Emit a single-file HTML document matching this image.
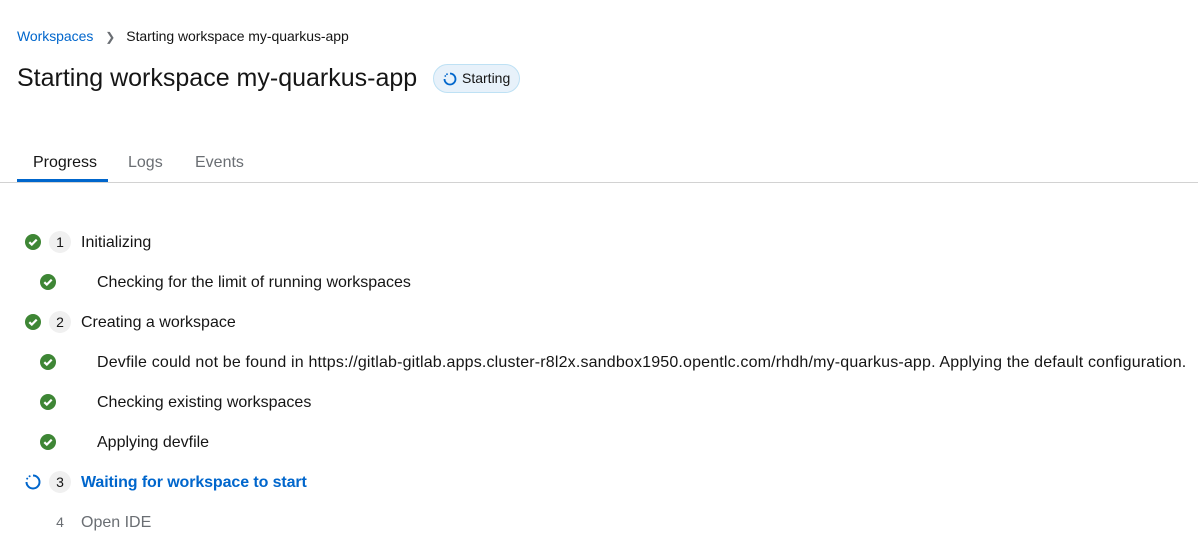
<!DOCTYPE html>
<html><head><style>
body{margin:0;width:1198px;height:552px;background:#fff;font-family:"Liberation Sans",sans-serif;color:#151515;position:relative;overflow:hidden}
.a{position:absolute;white-space:nowrap}
.bc{top:28px;left:17px;font-size:14px;letter-spacing:-0.05px}
.bc span.l{color:#0066cc}
.bc span.s{color:#6a6e73;margin:0 11px 0 12px;font-size:12px}
h1{position:absolute;top:64px;left:17px;margin:0;font-size:25px;font-weight:normal}
.badge{top:64px;left:433px;width:85px;height:27px;border:1px solid #bee1f4;background:#e7f1fa;border-radius:15px;font-size:14px;line-height:27px}
.tab{top:154px;font-size:16px;color:#6a6e73}
.ul{top:179px;left:17px;width:91px;height:3px;background:#0066cc}
.bd{top:182px;left:0;width:1198px;height:1px;background:#d2d2d2}
.row{position:absolute;font-size:16px;white-space:nowrap;line-height:20px}
.num{position:absolute;width:22px;height:22px;border-radius:50%;background:#f0f0f0;font-size:14px;text-align:center;line-height:22px;left:49px}
</style></head><body>
<div class="a bc"><span class="l">Workspaces</span><span class="s">❯</span>Starting workspace my-quarkus-app</div>
<h1>Starting workspace my-quarkus-app</h1>
<div class="a badge"><svg style="position:absolute;left:9px;top:7px" width="14" height="14" viewBox="0 0 14 14"><path d="M7 1.5A5.5 5.5 0 1 1 1.5 7" fill="none" stroke="#0066cc" stroke-width="1.8"/><circle cx="2.3" cy="4" r="0.9" fill="#0066cc"/><circle cx="4" cy="2.2" r="0.9" fill="#0066cc"/></svg><span style="position:absolute;left:28px">Starting</span></div>
<div class="a tab" style="left:33px;color:#151515">Progress</div>
<div class="a tab" style="left:128px">Logs</div>
<div class="a tab" style="left:195px">Events</div>
<div class="a ul"></div><div class="a bd"></div>

<svg width="0" height="0" style="position:absolute"><defs><symbol id="ck" viewBox="0 0 16 16"><circle cx="8" cy="8" r="8" fill="#3e8635"/><path d="M4.3 8.2l2.5 2.4 4.9-5" fill="none" stroke="#fff" stroke-width="2.2"/></symbol></defs></svg>

<svg class="a" style="left:25px;top:234px" width="16" height="16"><use href="#ck"/></svg>
<div class="num" style="top:231px">1</div><div class="row" style="left:81px;top:233px">Initializing</div>

<svg class="a" style="left:40px;top:274px" width="16" height="16"><use href="#ck"/></svg>
<div class="row" style="left:97px;top:273px">Checking for the limit of running workspaces</div>

<svg class="a" style="left:25px;top:314px" width="16" height="16"><use href="#ck"/></svg>
<div class="num" style="top:311px">2</div><div class="row" style="left:81px;top:313px">Creating a workspace</div>

<svg class="a" style="left:40px;top:354px" width="16" height="16"><use href="#ck"/></svg>
<div class="row" style="left:97px;top:353px;letter-spacing:0.17px">Devfile could not be found in https://gitlab-gitlab.apps.cluster-r8l2x.sandbox1950.opentlc.com/rhdh/my-quarkus-app. Applying the default configuration.</div>

<svg class="a" style="left:40px;top:394px" width="16" height="16"><use href="#ck"/></svg>
<div class="row" style="left:97px;top:393px">Checking existing workspaces</div>

<svg class="a" style="left:40px;top:434px" width="16" height="16"><use href="#ck"/></svg>
<div class="row" style="left:97px;top:433px">Applying devfile</div>

<svg class="a" style="left:25px;top:474px" width="16" height="16" viewBox="0 0 16 16"><path d="M8 1.5A6.5 6.5 0 1 1 1.5 8" fill="none" stroke="#0066cc" stroke-width="2"/><circle cx="2.2" cy="4.6" r="1" fill="#0066cc"/><circle cx="4.6" cy="2.2" r="1" fill="#0066cc"/></svg>
<div class="num" style="top:471px">3</div><div class="row" style="left:81px;top:473px;color:#0066cc;font-weight:bold;letter-spacing:-0.1px">Waiting for workspace to start</div>

<div class="num" style="top:511px;background:none;color:#6a6e73">4</div><div class="row" style="left:81px;top:513px;color:#6a6e73">Open IDE</div>
</body></html>
